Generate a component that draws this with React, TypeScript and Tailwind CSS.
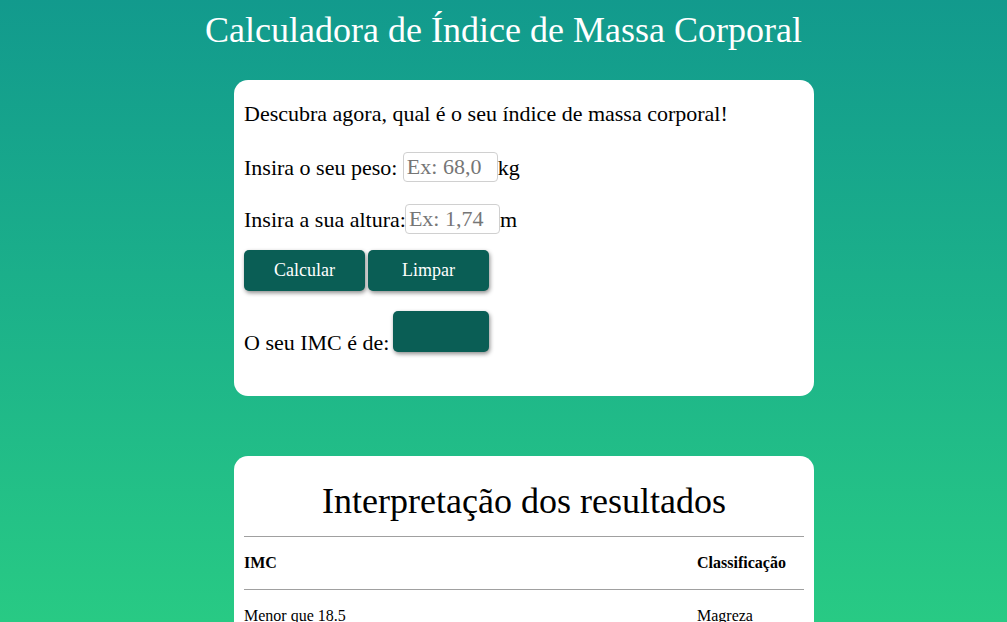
import React from 'react';

const rows = [
  ['Menor que 18.5', 'Magreza'],
  ['Entre 18.5 e 24.9', 'Normal'],
  ['Entre 25.0 e 29.9', 'Sobrepeso'],
  ['Entre 30.0 e 39.9', 'Obesidade'],
  ['Maior que 40.0', 'Obesidade Grave'],
];

const btn =
  'w-[121px] h-[41px] rounded-[5px] bg-[#0a5e55] text-white text-[18px] shadow-[1px_2px_4px_rgba(0,0,0,0.45)]';

const App = () => {
  return (
    <div className="min-h-screen bg-fixed bg-gradient-to-b from-[#129a8d] to-[#28ca84] font-['Liberation_Serif',serif] text-black pb-10">
      <h1 className="text-center text-white text-[36px] leading-[42px] pt-[9px] m-0">
        Calculadora de Índice de Massa Corporal
      </h1>

      <div className="ml-[234px] mt-[29px] w-[580px] bg-white rounded-[14px] px-[10px] pt-[101px] pb-[44px] text-[22px] leading-[25px] flex flex-col">
        <p className="-mt-[80px]">Descubra agora, qual é o seu índice de massa corporal!</p>
        <div className="flex items-center mt-[26px]">
          <span>Insira o seu peso:&nbsp;</span>
          <input
            placeholder="Ex: 68,0"
            className="w-[95px] h-[30px] border border-[#d0d0d0] rounded-[4px] px-[3px] text-[22px] placeholder:text-[#767676] outline-none"
          />
          <span>kg</span>
        </div>
        <div className="flex items-center mt-[22px]">
          <span className="-mr-[1px]">Insira a sua altura:</span>
          <input
            placeholder="Ex: 1,74"
            className="w-[95px] h-[30px] border border-[#d0d0d0] rounded-[4px] px-[3px] text-[22px] placeholder:text-[#767676] outline-none"
          />
          <span>m</span>
        </div>
        <div className="flex gap-[3px] mt-[16px]">
          <button className={btn}>Calcular</button>
          <button className={btn}>Limpar</button>
        </div>
        <div className="flex items-end mt-[20px]">
          <span className="leading-[20px] -mb-[1px] mr-[4px]">O seu IMC é de:</span>
          <div className="w-[96px] h-[41px] rounded-[5px] bg-[#0a5e55] shadow-[1px_2px_4px_rgba(0,0,0,0.45)]" />
        </div>
      </div>

      <div className="ml-[234px] mt-[60px] w-[580px] bg-white rounded-[14px] px-[10px] pt-[24px] pb-[20px]">
        <h2 className="text-center text-[36px] leading-[42px]">Interpretação dos resultados</h2>
        <table className="w-full mt-[14px] border-t border-[#a0a0a0] text-[16px] leading-[24px] text-left">
          <thead>
            <tr className="border-b border-[#a0a0a0]">
              <th className="py-[14px] font-bold">IMC</th>
              <th className="py-[14px] font-bold w-[107px]">Classificação</th>
            </tr>
          </thead>
          <tbody>
            {rows.map(([a, b]) => (
              <tr key={a} className="border-b border-[#a0a0a0]">
                <td className="py-[14px]">{a}</td>
                <td className="py-[14px]">{b}</td>
              </tr>
            ))}
          </tbody>
        </table>
      </div>
    </div>
  );
};

export default App;
